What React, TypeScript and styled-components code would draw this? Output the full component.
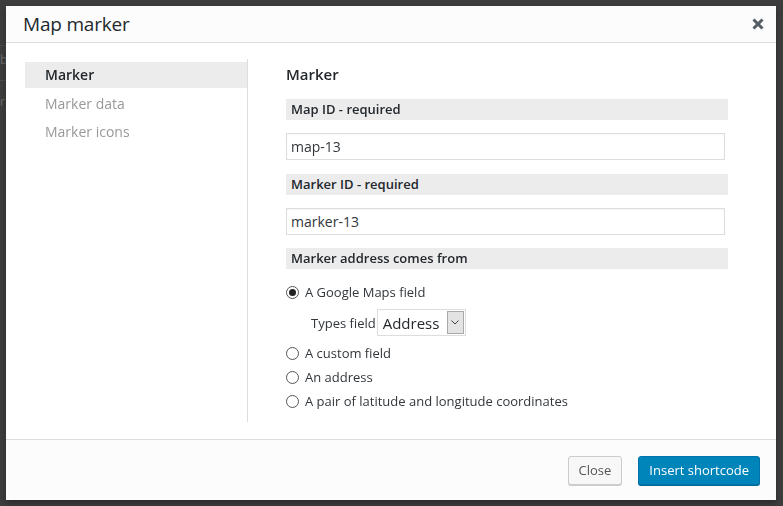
import React from "react";
import styled, { createGlobalStyle } from "styled-components";

const Global = createGlobalStyle`
  html, body { margin: 0; padding: 0; }
  body {
    background: #3e3e3e;
    font-family: "Open Sans", "Noto Sans", Arial, sans-serif;
    width: 783px; height: 506px; overflow: hidden;
  }
  * { box-sizing: border-box; }
`;

const Backdrop = styled.div`
  position: fixed;
  inset: 0;
  background: #3d3d3d;
`;

const GhostLetter = styled.span<{ $top: number }>`
  position: absolute;
  left: 0;
  top: ${(p) => p.$top}px;
  font-size: 12px;
  line-height: 14px;
  color: #6a6a6a;
`;

const GhostLine = styled.div<{ $top: number }>`
  position: absolute;
  left: 0;
  width: 8px;
  top: ${(p) => p.$top}px;
  height: 1px;
  background: #4a4a4a;
`;

const Modal = styled.div`
  position: absolute;
  top: 6px;
  left: 6px;
  width: 770px;
  height: 494px;
  background: #fff;
  display: flex;
  flex-direction: column;
  box-shadow: 0 3px 6px rgba(0, 0, 0, 0.3);
`;

const Header = styled.div`
  height: 37px;
  flex: none;
  background: #fcfcfc;
  border-bottom: 1px solid #dddddd;
  display: flex;
  align-items: center;
  justify-content: space-between;
  padding: 0 11px 0 17px;
`;

const Title = styled.h1`
  margin: 0;
  font-size: 19px;
  font-weight: 400;
  letter-spacing: -0.2px;
  color: #23282d;
  line-height: 36px;
`;

const CloseX = styled.button`
  border: 0;
  background: none;
  padding: 0;
  width: 14px;
  height: 14px;
  display: flex;
  align-items: center;
  justify-content: center;
  cursor: pointer;
`;

const Body = styled.div`
  flex: 1;
  display: flex;
  padding: 16px 48px 17px 19px;
`;

const Sidebar = styled.nav`
  width: 223px;
  border-right: 1px solid #dddddd;
  padding-top: 3px;
  display: flex;
  flex-direction: column;
`;

const NavItem = styled.div<{ $active?: boolean }>`
  height: ${(p) => (p.$active ? 26 : 28)}px;
  line-height: ${(p) => (p.$active ? 26 : 32)}px;
  padding-left: 20px;
  font-size: 14px;
  background: ${(p) => (p.$active ? "#ececec" : "transparent")};
  color: ${(p) => (p.$active ? "#23282d" : "#999999")};
  font-weight: ${(p) => (p.$active ? 600 : 400)};
`;

const Content = styled.div`
  flex: 1;
  padding: 3px 0 0 38px;
  display: flex;
  flex-direction: column;
`;

const Heading = styled.h2`
  margin: 0;
  font-size: 15px;
  font-weight: 600;
  line-height: 24px;
  color: #23282d;
`;

const SectionHead = styled.div<{ $mt: number }>`
  margin-top: ${(p) => p.$mt}px;
  height: 21px;
  line-height: 20px;
  background: #ececec;
  padding-left: 5px;
  font-size: 13px;
  font-weight: 600;
  color: #23282d;
`;

const TextInput = styled.input`
  margin-top: 13px;
  width: 439px;
  height: 27px;
  border: 1px solid #dddddd;
  box-shadow: inset 0 1px 2px rgba(0, 0, 0, 0.04);
  padding: 0 4px;
  font-family: inherit;
  font-size: 14px;
  color: #32373c;
  outline: none;
`;

const RadioGroup = styled.div`
  margin-top: 11px;
  display: flex;
  flex-direction: column;
`;

const RadioRow = styled.label`
  height: 24px;
  display: flex;
  align-items: center;
  gap: 6px;
  font-size: 13px;
  color: #32373c;
`;

const RadioCircle = styled.span<{ $checked?: boolean }>`
  width: 13px;
  height: 13px;
  border-radius: 50%;
  border: 1px solid #555;
  background: #fff;
  display: flex;
  align-items: center;
  justify-content: center;
  &::after {
    content: "";
    width: 7px;
    height: 7px;
    border-radius: 50%;
    background: ${(p) => (p.$checked ? "#222" : "transparent")};
  }
`;

const TypesRow = styled.div`
  height: 37px;
  display: flex;
  align-items: center;
  padding-left: 25px;
  gap: 1px;
  font-size: 13px;
  color: #32373c;
`;

const SelectBox = styled.div`
  width: 89px;
  height: 27px;
  border: 1px solid #dddddd;
  display: flex;
  align-items: stretch;
  padding: 1px;
  background: #fff;
`;

const SelectValue = styled.span`
  flex: 1;
  font-size: 15px;
  line-height: 24px;
  padding-left: 4px;
  color: #23282d;
`;

const SelectArrow = styled.span`
  width: 17px;
  background: #e3e3e3;
  border: 1px solid #a9a9a9;
  display: flex;
  align-items: center;
  justify-content: center;
`;

const Footer = styled.div`
  height: 61px;
  flex: none;
  background: #fcfcfc;
  border-top: 1px solid #dddddd;
  display: flex;
  align-items: center;
  justify-content: flex-end;
  gap: 16px;
  padding: 0 16px 0 0;
`;

const Button = styled.button<{ $primary?: boolean }>`
  height: 29px;
  padding: 0 10px;
  font-family: inherit;
  font-size: 13px;
  border-radius: 3px;
  cursor: pointer;
  border: 1px solid ${(p) => (p.$primary ? "#0073aa" : "#cccccc")};
  background: ${(p) => (p.$primary ? "#0085ba" : "#f7f7f7")};
  color: ${(p) => (p.$primary ? "#ffffff" : "#555555")};
  box-shadow: ${(p) =>
    p.$primary ? "0 1px 0 #006799" : "0 1px 0 #cccccc"};
`;

const radios = [
  "A custom field",
  "An address",
  "A pair of latitude and longitude coordinates",
];

export default function App() {
  return (
    <>
      <Global />
      <Backdrop>
        <GhostLine $top={45} />
        <GhostLetter $top={53}>b</GhostLetter>
        <GhostLine $top={80} />
        <GhostLetter $top={95}>r</GhostLetter>
      </Backdrop>
      <Modal>
        <Header>
          <Title>Map marker</Title>
          <CloseX aria-label="Close">
            <svg width="12" height="12" viewBox="0 0 12 12">
              <path
                d="M1.5 1.5 L10.5 10.5 M10.5 1.5 L1.5 10.5"
                stroke="#555d66"
                strokeWidth="3"
              />
            </svg>
          </CloseX>
        </Header>
        <Body>
          <Sidebar>
            <NavItem $active>Marker</NavItem>
            <NavItem>Marker data</NavItem>
            <NavItem>Marker icons</NavItem>
          </Sidebar>
          <Content>
            <Heading>Marker</Heading>
            <SectionHead $mt={13}>Map ID - required</SectionHead>
            <TextInput defaultValue="map-13" />
            <SectionHead $mt={14}>Marker ID - required</SectionHead>
            <TextInput defaultValue="marker-13" />
            <SectionHead $mt={13}>Marker address comes from</SectionHead>
            <RadioGroup>
              <RadioRow>
                <RadioCircle $checked />
                A Google Maps field
              </RadioRow>
              <TypesRow>
                Types field
                <SelectBox>
                  <SelectValue>Address</SelectValue>
                  <SelectArrow>
                    <svg width="8" height="5" viewBox="0 0 8 5">
                      <path
                        d="M0.5 0.5 L4 4 L7.5 0.5"
                        fill="none"
                        stroke="#444"
                        strokeWidth="1"
                      />
                    </svg>
                  </SelectArrow>
                </SelectBox>
              </TypesRow>
              {radios.map((r) => (
                <RadioRow key={r}>
                  <RadioCircle />
                  {r}
                </RadioRow>
              ))}
            </RadioGroup>
          </Content>
        </Body>
        <Footer>
          <Button>Close</Button>
          <Button $primary>Insert shortcode</Button>
        </Footer>
      </Modal>
    </>
  );
}
